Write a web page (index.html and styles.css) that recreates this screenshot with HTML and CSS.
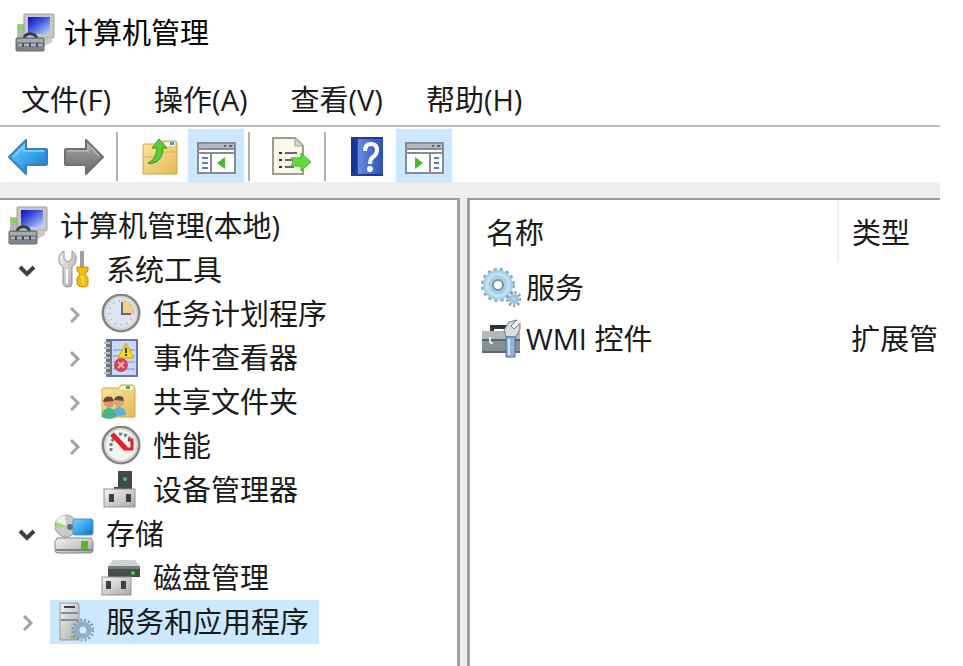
FILE: index.html
```html
<!DOCTYPE html>
<html lang="zh-CN">
<head>
    <meta charset="UTF-8">
    <meta name="viewport" content="width=device-width, initial-scale=1.0">
    <title>计算机管理</title>
    <link rel="stylesheet" href="styles.css">
</head>
<body>
    <!-- shared icons -->
    <svg class="defs" width="0" height="0" aria-hidden="true">
        <defs>
            <linearGradient id="screen" x1="0" y1="0" x2="1" y2="1">
                <stop offset="0" stop-color="#0a12c8"/><stop offset=".4" stop-color="#3c50dc"/><stop offset="1" stop-color="#c4d8fa"/>
            </linearGradient>
            <linearGradient id="blue" x1="0" y1="0" x2="1" y2="1">
                <stop offset="0" stop-color="#7cd0fa"/><stop offset=".5" stop-color="#38a8ee"/><stop offset="1" stop-color="#1272c0"/>
            </linearGradient>
            <linearGradient id="gray" x1="0" y1="0" x2="0" y2="1">
                <stop offset="0" stop-color="#a8a8a8"/><stop offset="1" stop-color="#686868"/>
            </linearGradient>
            <linearGradient id="folder" x1="0" y1="0" x2="1" y2="1">
                <stop offset="0" stop-color="#fbe6a0"/><stop offset="1" stop-color="#e6b956"/>
            </linearGradient>
            <linearGradient id="steel" x1="0" y1="0" x2="1" y2="1">
                <stop offset="0" stop-color="#f4f4f4"/><stop offset="1" stop-color="#a8a8aa"/>
            </linearGradient>
            <linearGradient id="book" x1="0" y1="0" x2="1" y2="0">
                <stop offset="0" stop-color="#16328c"/><stop offset=".2" stop-color="#1c3c9c"/><stop offset=".22" stop-color="#6a8ae0"/><stop offset="1" stop-color="#2c50b8"/>
            </linearGradient>
        </defs>
        <symbol id="computer" viewBox="0 0 40 40">
            <path d="M2 11h10v15H2z" fill="#b4b8b4"/>
            <path d="M3 13h6v4H3z" fill="#7edc3c"/>
            <rect x="9" y="1" width="30" height="24" rx="1" fill="#c6c6c4" stroke="#a0a09e"/>
            <rect x="13" y="4" width="22" height="17" fill="url(#screen)"/>
            <path d="M28 25h9v4l-8 4z" fill="#c9c9c6"/>
            <path d="M9 26c1-7 11-7 13 0" fill="none" stroke="#3c4046" stroke-width="3"/>
            <rect x="1" y="25" width="28" height="13" rx="1" fill="#7e868c" stroke="#656c72"/>
            <path d="M2 26h26v3H2z" fill="#a4abb0"/>
            <path d="M3 32h24" stroke="#b0b6ba" stroke-width="2"/>
            <path d="M8 30v4M15 30v4M22 30v4" stroke="#4c5258" stroke-width="2"/>
        </symbol>
        <symbol id="down" viewBox="0 0 18 18">
            <path d="M2 6l7 7 7-7" fill="none" stroke="#404040" stroke-width="4"/>
        </symbol>
        <symbol id="right" viewBox="0 0 18 18">
            <path d="M6 3l7 7-7 7" fill="none" stroke="#a4a4a4" stroke-width="3"/>
        </symbol>
    </svg>

    <div class="window">
        <header class="titlebar">
            <svg class="icon"><use href="#computer"/></svg>
            <h1>计算机管理</h1>
        </header>

        <nav class="menubar">
            <button type="button">文件(F)</button>
            <button type="button">操作(A)</button>
            <button type="button">查看(V)</button>
            <button type="button">帮助(H)</button>
        </nav>

        <div class="toolbar" role="toolbar" aria-label="工具栏">
            <button type="button" aria-label="后退">
                <svg class="icon" viewBox="0 0 40 40">
                    <path d="M1 20L18 3v9h20q1 0 1 1v14q0 1-1 1H18v9z" fill="url(#blue)" stroke="#3c80b8" stroke-width="2" stroke-linejoin="round"/>
                    <path d="M5 20L16 9v5h20" fill="none" stroke="#74c8f6" stroke-width="2"/>
                </svg>
            </button>
            <button type="button" aria-label="前进">
                <svg class="icon" viewBox="0 0 40 40">
                    <path d="M39 20L22 3v9H2q-1 0-1 1v14q0 1 1 1h20v9z" fill="url(#gray)" stroke="#707070" stroke-width="2" stroke-linejoin="round"/>
                    <path d="M3 14h21V8l11 11" fill="none" stroke="#b0b0b0" stroke-width="2"/>
                </svg>
            </button>
            <span class="separator"></span>
            <button type="button" aria-label="上移">
                <svg class="icon" viewBox="0 0 40 40">
                    <path d="M3 9q0-2 2-2h15l3-3h12q2 0 2 2v31H3z" fill="url(#folder)" stroke="#cba550"/>
                    <path d="M25 5h10v4H23z" fill="#f8f4e0"/>
                    <path d="M30 5h4v3h-4z" fill="#4a94dc"/>
                    <path d="M4 20h12l6-5h14" fill="none" stroke="#d9b45c"/>
                    <path d="M8 26q8-3 9-15h-5l7-9 8 9h-4q0 13-12 16z" fill="#58cc34" stroke="#38982c" stroke-linejoin="round"/>
                </svg>
            </button>
            <button type="button" class="active" aria-label="显示/隐藏控制台树" aria-pressed="true">
                <svg class="icon" viewBox="0 0 40 40">
                    <rect x="2" y="6" width="37" height="30" fill="#fff" stroke="#868c96" stroke-width="2"/>
                    <path d="M3 7h35v4H3z" fill="#b4bac4"/>
                    <path d="M28 9h2M33 9h3" stroke="#5c6470" stroke-width="2"/>
                    <path d="M3 12h35M2 16h37M15 16v20" stroke="#868c96" stroke-width="2"/>
                    <path d="M6 21h6M6 26h6M6 31h6" stroke="#4c80c0" stroke-width="2"/>
                    <path d="M29 20v12l-8-6z" fill="#44b830"/>
                </svg>
            </button>
            <span class="separator"></span>
            <button type="button" aria-label="导出列表">
                <svg class="icon" viewBox="0 0 40 40">
                    <path d="M1 1h22l8 8v28H1z" fill="#faf8e6" stroke="#a09c8c" stroke-width="2"/>
                    <path d="M23 1v8h8z" fill="#d4d4d0" stroke="#a4a49c"/>
                    <path d="M7 16h3M7 23h3M7 30h3" stroke="#303030" stroke-width="2"/>
                    <path d="M13 16h12M13 23h12M13 30h9" stroke="#686868" stroke-width="2"/>
                    <path d="M19 21h10v-5l10 9-10 9v-5H19l2-4z" fill="#64d840" stroke="#3eb62c" stroke-linejoin="round"/>
                </svg>
            </button>
            <span class="separator"></span>
            <button type="button" aria-label="帮助">
                <svg class="icon" viewBox="0 0 40 40">
                    <rect x="3" y="0" width="32" height="39" fill="url(#book)"/>
                    <path d="M3 1h32M3 38h32" stroke="#1c3c98" stroke-width="2"/>
                    <path d="M17 14q0-7 6-7t6 6q0 4-4 7-3 2-3 7" fill="none" stroke="#fff" stroke-width="4"/>
                    <circle cx="22" cy="32" r="3" fill="#fff"/>
                </svg>
            </button>
            <button type="button" class="active" aria-label="显示/隐藏操作窗格" aria-pressed="true">
                <svg class="icon" viewBox="0 0 40 40">
                    <rect x="2" y="6" width="37" height="30" fill="#fff" stroke="#868c96" stroke-width="2"/>
                    <path d="M3 7h35v4H3z" fill="#b4bac4"/>
                    <path d="M28 9h2M33 9h3" stroke="#5c6470" stroke-width="2"/>
                    <path d="M3 12h35M2 16h37M26 16v20" stroke="#868c96" stroke-width="2"/>
                    <path d="M30 21h5M30 26h5M30 31h5" stroke="#4c80c0" stroke-width="2"/>
                    <path d="M11 20v12l8-6z" fill="#44b830"/>
                </svg>
            </button>
        </div>

        <main class="panes">
            <section class="pane tree">
                <ul>
                    <li>
                        <div class="row">
                            <a class="node" href="#"><svg class="icon"><use href="#computer"/></svg>计算机管理(本地)</a>
                        </div>
                    </li>
                    <li>
                        <div class="row">
                            <button type="button" class="toggle" aria-label="折叠" aria-expanded="true"><svg><use href="#down"/></svg></button>
                            <a class="node" href="#">
                                <svg class="icon" viewBox="0 0 40 40">
                                    <path d="M10 1v8l4 3 4-3V1q5 3 4 9 0 4-4 7v17q0 3-4 3t-5-3V17Q4 14 5 7q1-4 5-6z" fill="url(#steel)" stroke="#909092"/>
                                    <path d="M13 19v15" stroke="#fafafa" stroke-width="2"/>
                                    <path d="M28 1v17" stroke="#a0a0a4" stroke-width="4"/>
                                    <path d="M23 17h11v4l-3 3 3 4v6q0 3-5 3t-6-3v-6l3-4-3-3z" fill="#f2b90e" stroke="#c08c0c"/>
                                    <path d="M27 27h2v7" fill="none" stroke="#fde060" stroke-width="2"/>
                                </svg>系统工具
                            </a>
                        </div>
                        <ul>
                            <li class="row">
                                <button type="button" class="toggle" aria-label="展开" aria-expanded="false"><svg><use href="#right"/></svg></button>
                                <a class="node" href="#">
                                    <svg class="icon" viewBox="0 0 40 40">
                                        <circle cx="20" cy="19" r="18" fill="#dce6ee" stroke="#808688" stroke-width="3"/>
                                        <circle cx="20" cy="19" r="16" fill="none" stroke="#d4d6d4" stroke-width="2"/>
                                        <path d="M21 19V5a14 14 0 0 1 13 14z" fill="#f8cf8c"/>
                                        <circle cx="20" cy="19" r="12" fill="none" stroke="#a4acb4" stroke-width="2" stroke-dasharray="1 5"/>
                                        <path d="M21 8v12h9" fill="none" stroke="#606c78" stroke-width="2"/>
                                    </svg>任务计划程序
                                </a>
                            </li>
                            <li class="row">
                                <button type="button" class="toggle" aria-label="展开" aria-expanded="false"><svg><use href="#right"/></svg></button>
                                <a class="node" href="#">
                                    <svg class="icon" viewBox="0 0 40 40">
                                        <rect x="6" y="2" width="30" height="36" fill="#c8daf4" stroke="#6676b4" stroke-width="2"/>
                                        <path d="M5 1h6v36H5z" fill="#6a7286"/>
                                        <path d="M3 5h6M3 10h6M3 15h6M3 20h6M3 25h6M3 30h6M3 35h6" stroke="#b8bcc4" stroke-width="2"/>
                                        <path d="M12 12h22M12 18h22M12 24h22M12 31h22" stroke="#7890c8"/>
                                        <path d="M25 5l8 15H17z" fill="#f8d820" stroke="#d2a810"/>
                                        <path d="M25 10v5M25 16v2" stroke="#403800" stroke-width="2"/>
                                        <circle cx="20" cy="27" r="7" fill="#d04454"/>
                                        <path d="M17 24l6 6M23 24l-6 6" stroke="#f0b0b4" stroke-width="2"/>
                                    </svg>事件查看器
                                </a>
                            </li>
                            <li class="row">
                                <button type="button" class="toggle" aria-label="展开" aria-expanded="false"><svg><use href="#right"/></svg></button>
                                <a class="node" href="#">
                                    <svg class="icon" viewBox="0 0 40 40">
                                        <path d="M1 8q0-2 2-2h14l3-3h12l2 3v29H1z" fill="url(#folder)" stroke="#d0a850"/>
                                        <path d="M20 4h12v4H19z" fill="#f8f4e0"/>
                                        <path d="M25 4h4v3h-4z" fill="#58a460"/>
                                        <path d="M11 35q0-10 7-10t7 8z" fill="#58b4d8"/>
                                        <circle cx="18" cy="20" r="5" fill="#dba574"/>
                                        <path d="M13 18q2-6 9-3l1 4z" fill="#50504c"/>
                                        <path d="M1 35q0-9 7-9t7 9q-7 4-14 0z" fill="#48b68c"/>
                                        <circle cx="8" cy="21" r="5" fill="#d89c6c"/>
                                        <path d="M2 20q1-7 9-5l2 4z" fill="#70482c"/>
                                    </svg>共享文件夹
                                </a>
                            </li>
                            <li class="row">
                                <button type="button" class="toggle" aria-label="展开" aria-expanded="false"><svg><use href="#right"/></svg></button>
                                <a class="node" href="#">
                                    <svg class="icon" viewBox="0 0 40 40">
                                        <circle cx="20" cy="19" r="18" fill="#f4f4f2" stroke="#848484" stroke-width="3"/>
                                        <circle cx="20" cy="19" r="16" fill="none" stroke="#d8d8d6" stroke-width="2"/>
                                        <path d="M10 25v-9l4-5M18 8q8 0 12 6" fill="none" stroke="#70887c" stroke-width="3" stroke-dasharray="3 2"/>
                                        <path d="M11 8l14 15" stroke="#e0202c" stroke-width="5"/>
                                        <path d="M27 14h4v9h-8" fill="none" stroke="#e0202c" stroke-width="3"/>
                                    </svg>性能
                                </a>
                            </li>
                            <li class="row">
                                <span class="toggle"></span>
                                <a class="node" href="#">
                                    <svg class="icon" viewBox="0 0 40 40">
                                        <path d="M17 1h14v19H17z" fill="#444a48"/>
                                        <path d="M13 17h5v3h-5z" fill="#444a48"/>
                                        <circle cx="24" cy="9" r="2" fill="#40c860"/>
                                        <rect x="3" y="19" width="31" height="18" fill="url(#steel)" stroke="#949494"/>
                                        <path d="M8 24h5v8H8zM25 24h5v8h-5z" fill="#404040"/>
                                    </svg>设备管理器
                                </a>
                            </li>
                        </ul>
                    </li>
                    <li>
                        <div class="row">
                            <button type="button" class="toggle" aria-label="折叠" aria-expanded="true"><svg><use href="#down"/></svg></button>
                            <a class="node" href="#">
                                <svg class="icon" viewBox="0 0 40 40">
                                    <circle cx="12" cy="12" r="11" fill="#c8caca" stroke="#a0a4a4"/>
                                    <path d="M12 12L2 8q2-6 9-7z" fill="#eef0ee"/>
                                    <path d="M12 12L1 14l2-6z" fill="#a8dc70"/>
                                    <circle cx="16" cy="13" r="3" fill="#686c70"/>
                                    <rect x="19" y="5" width="20" height="16" rx="2" fill="url(#blue)" stroke="#4494bc"/>
                                    <path d="M3 24h34l2 4v8q0 3-3 3H4q-3 0-3-3v-8z" fill="url(#steel)" stroke="#808484"/>
                                    <path d="M2 36h36" stroke="#808484" stroke-width="2"/>
                                    <path d="M27 27h7v8h-7z" fill="#58b828"/>
                                </svg>存储
                            </a>
                        </div>
                        <ul>
                            <li class="row">
                                <span class="toggle"></span>
                                <a class="node" href="#">
                                    <svg class="icon" viewBox="0 0 40 40">
                                        <path d="M12 2h22l5 6H7z" fill="#d0d2d4"/>
                                        <path d="M7 8h32v11H7z" fill="#484c4c"/>
                                        <path d="M7 8h32v3H7z" fill="#787c7c"/>
                                        <circle cx="32" cy="15" r="2" fill="#40dc30"/>
                                        <rect x="1" y="19" width="29" height="18" fill="url(#steel)" stroke="#949494"/>
                                        <path d="M5 23h5v8H5zM20 23h5v8h-5z" fill="#404040"/>
                                    </svg>磁盘管理
                                </a>
                            </li>
                        </ul>
                    </li>
                    <li>
                        <div class="row">
                            <button type="button" class="toggle" aria-label="展开" aria-expanded="false"><svg><use href="#right"/></svg></button>
                            <a class="node selected" href="#">
                                <svg class="icon" viewBox="0 0 40 40">
                                    <path d="M6 1h18l1 3v34H6z" fill="url(#steel)" stroke="#949a9e"/>
                                    <path d="M10 5h11" stroke="#404448" stroke-width="2"/>
                                    <path d="M7 11h17M7 18h17" stroke="#868c90" stroke-width="2"/>
                                    <path d="M17 35h5" stroke="#70d830" stroke-width="3"/>
                                    <circle cx="29" cy="28" r="10" fill="none" stroke="#7e9fb4" stroke-width="3" stroke-dasharray="2 2"/>
                                    <circle cx="29" cy="28" r="6" fill="#dceaf4" stroke="#8cb0c8" stroke-width="5"/>
                                </svg>服务和应用程序
                            </a>
                        </div>
                    </li>
                </ul>
            </section>

            <section class="pane list">
                <table>
                    <thead>
                        <tr><th class="name" scope="col">名称</th><th scope="col">类型</th></tr>
                    </thead>
                    <tbody>
                        <tr>
                            <td>
                                <a class="item" href="#">
                                    <svg class="icon" viewBox="0 0 40 40">
                                        <circle cx="17" cy="17" r="15" fill="none" stroke="#80a4b8" stroke-width="4" stroke-dasharray="3 3"/>
                                        <circle cx="17" cy="17" r="10" fill="#fff" stroke="#a8d0e6" stroke-width="10"/>
                                        <circle cx="17" cy="17" r="11" fill="none" stroke="#c4e2f0" stroke-width="3"/>
                                        <circle cx="17" cy="17" r="5" fill="none" stroke="#7894a4" stroke-width="2"/>
                                        <circle cx="33" cy="31" r="6" fill="none" stroke="#80a4bc" stroke-width="4" stroke-dasharray="2 2"/>
                                        <circle cx="33" cy="31" r="3" fill="#e4f0f6" stroke="#a0c4d8" stroke-width="4"/>
                                    </svg>服务
                                </a>
                            </td>
                            <td></td>
                        </tr>
                        <tr>
                            <td>
                                <a class="item" href="#">
                                    <svg class="icon" viewBox="0 0 40 40">
                                        <path d="M11 13V8h14v5" fill="none" stroke="#303436" stroke-width="4"/>
                                        <path d="M1 12h38v22H1z" fill="#849094"/>
                                        <path d="M1 12h38v8H1z" fill="#b0b8bc"/>
                                        <path d="M1 21h38M1 33h38" stroke="#5e686c" stroke-width="2"/>
                                        <path d="M9 18v6M9 24h3" stroke="#e0e4e4" stroke-width="2"/>
                                        <path d="M36 1l-8 2-5 8 2 7h10l4-8V4l-6 6-3-3z" fill="#d8dcde" stroke="#70787c"/>
                                        <path d="M25 18h9v20h-9z" fill="#94b4e0" stroke="#4c6ca4"/>
                                        <path d="M28 20v16" stroke="#d0e0f8" stroke-width="2"/>
                                    </svg>WMI 控件
                                </a>
                            </td>
                            <td>扩展管</td>
                        </tr>
                    </tbody>
                </table>
            </section>
        </main>
    </div>
</body>
</html>
```
FILE: styles.css
```css
* {
    box-sizing: border-box;
}
body {
    margin: 0;
    background-color: #fff;
    color: #1a1a1a;
    font-family: "Open Sans", "Noto Sans CJK SC", sans-serif;
    font-size: 29px;
    line-height: 44px;
}
button {
    padding: 0;
    border: none;
    background: none;
    color: inherit;
    font: inherit;
    cursor: pointer;
}
a {
    color: inherit;
    text-decoration: none;
}
ul {
    margin: 0;
    padding: 0;
    list-style: none;
}
.defs {
    position: absolute;
}
.icon {
    display: block;
    flex: none;
    width: 40px;
    height: 40px;
}
.window {
    display: flex;
    flex-direction: column;
    min-height: 100vh;
    margin-right: 23px;
}

/* title and menu */
.titlebar {
    display: flex;
    align-items: center;
    gap: 9px;
    height: 66px;
    padding-left: 15px;
}
.titlebar h1 {
    margin: 0;
    color: #000;
    font-size: 29px;
    font-weight: normal;
}
.menubar {
    display: flex;
    align-items: center;
    gap: 43px;
    height: 59px;
    padding: 8px 0 0 21px;
}

/* toolbar */
.toolbar {
    display: flex;
    align-items: center;
    height: 57px;
    border-top: 2px solid #bcbcbc;
}
.toolbar button {
    display: flex;
    justify-content: center;
    align-items: center;
    width: 56px;
    height: 53px;
    margin-top: 2px;
    padding-top: 3px;
}
.toolbar .active {
    background-color: #cce8ff;
}
.separator {
    width: 2px;
    height: 49px;
    margin: 4px 14px 0 4px;
    background-color: #b0b0b0;
}

/* panes */
.panes {
    display: grid;
    grid-template-columns: 460px minmax(0, 1fr);
    gap: 7px;
    flex: 1;
    padding-top: 16px;
    background-color: #eee;
}
.pane {
    border-top: 2px solid #999;
    background-color: #fff;
}
.tree {
    padding: 4px 0 0 4px;
    border-right: 3px solid #a0a0a0;
}
.list {
    overflow: hidden;
    border-left: 3px solid #a0a0a0;
}
.tree ul ul {
    padding-left: 47px;
}
.row {
    display: flex;
    height: 44px;
}
.toggle {
    display: flex;
    justify-content: center;
    align-items: center;
    width: 46px;
}
.toggle svg {
    width: 18px;
    height: 18px;
}
.node {
    display: flex;
    align-items: center;
    gap: 12px;
    padding: 0 10px 0 4px;
    white-space: nowrap;
}
.selected {
    background-color: #cce8ff;
}

/* list */
table {
    width: 100%;
    table-layout: fixed;
    border-collapse: collapse;
}
th, td {
    padding: 0 0 0 13px;
    font-weight: normal;
    text-align: left;
    white-space: nowrap;
}
th {
    height: 62px;
    padding-top: 4px;
}
th.name {
    width: 368px;
    padding-left: 16px;
    border-right: 2px solid #eee;
}
td {
    height: 51px;
}
td:first-child {
    padding-left: 11px;
}
.item {
    display: flex;
    align-items: center;
    gap: 5px;
}
```
